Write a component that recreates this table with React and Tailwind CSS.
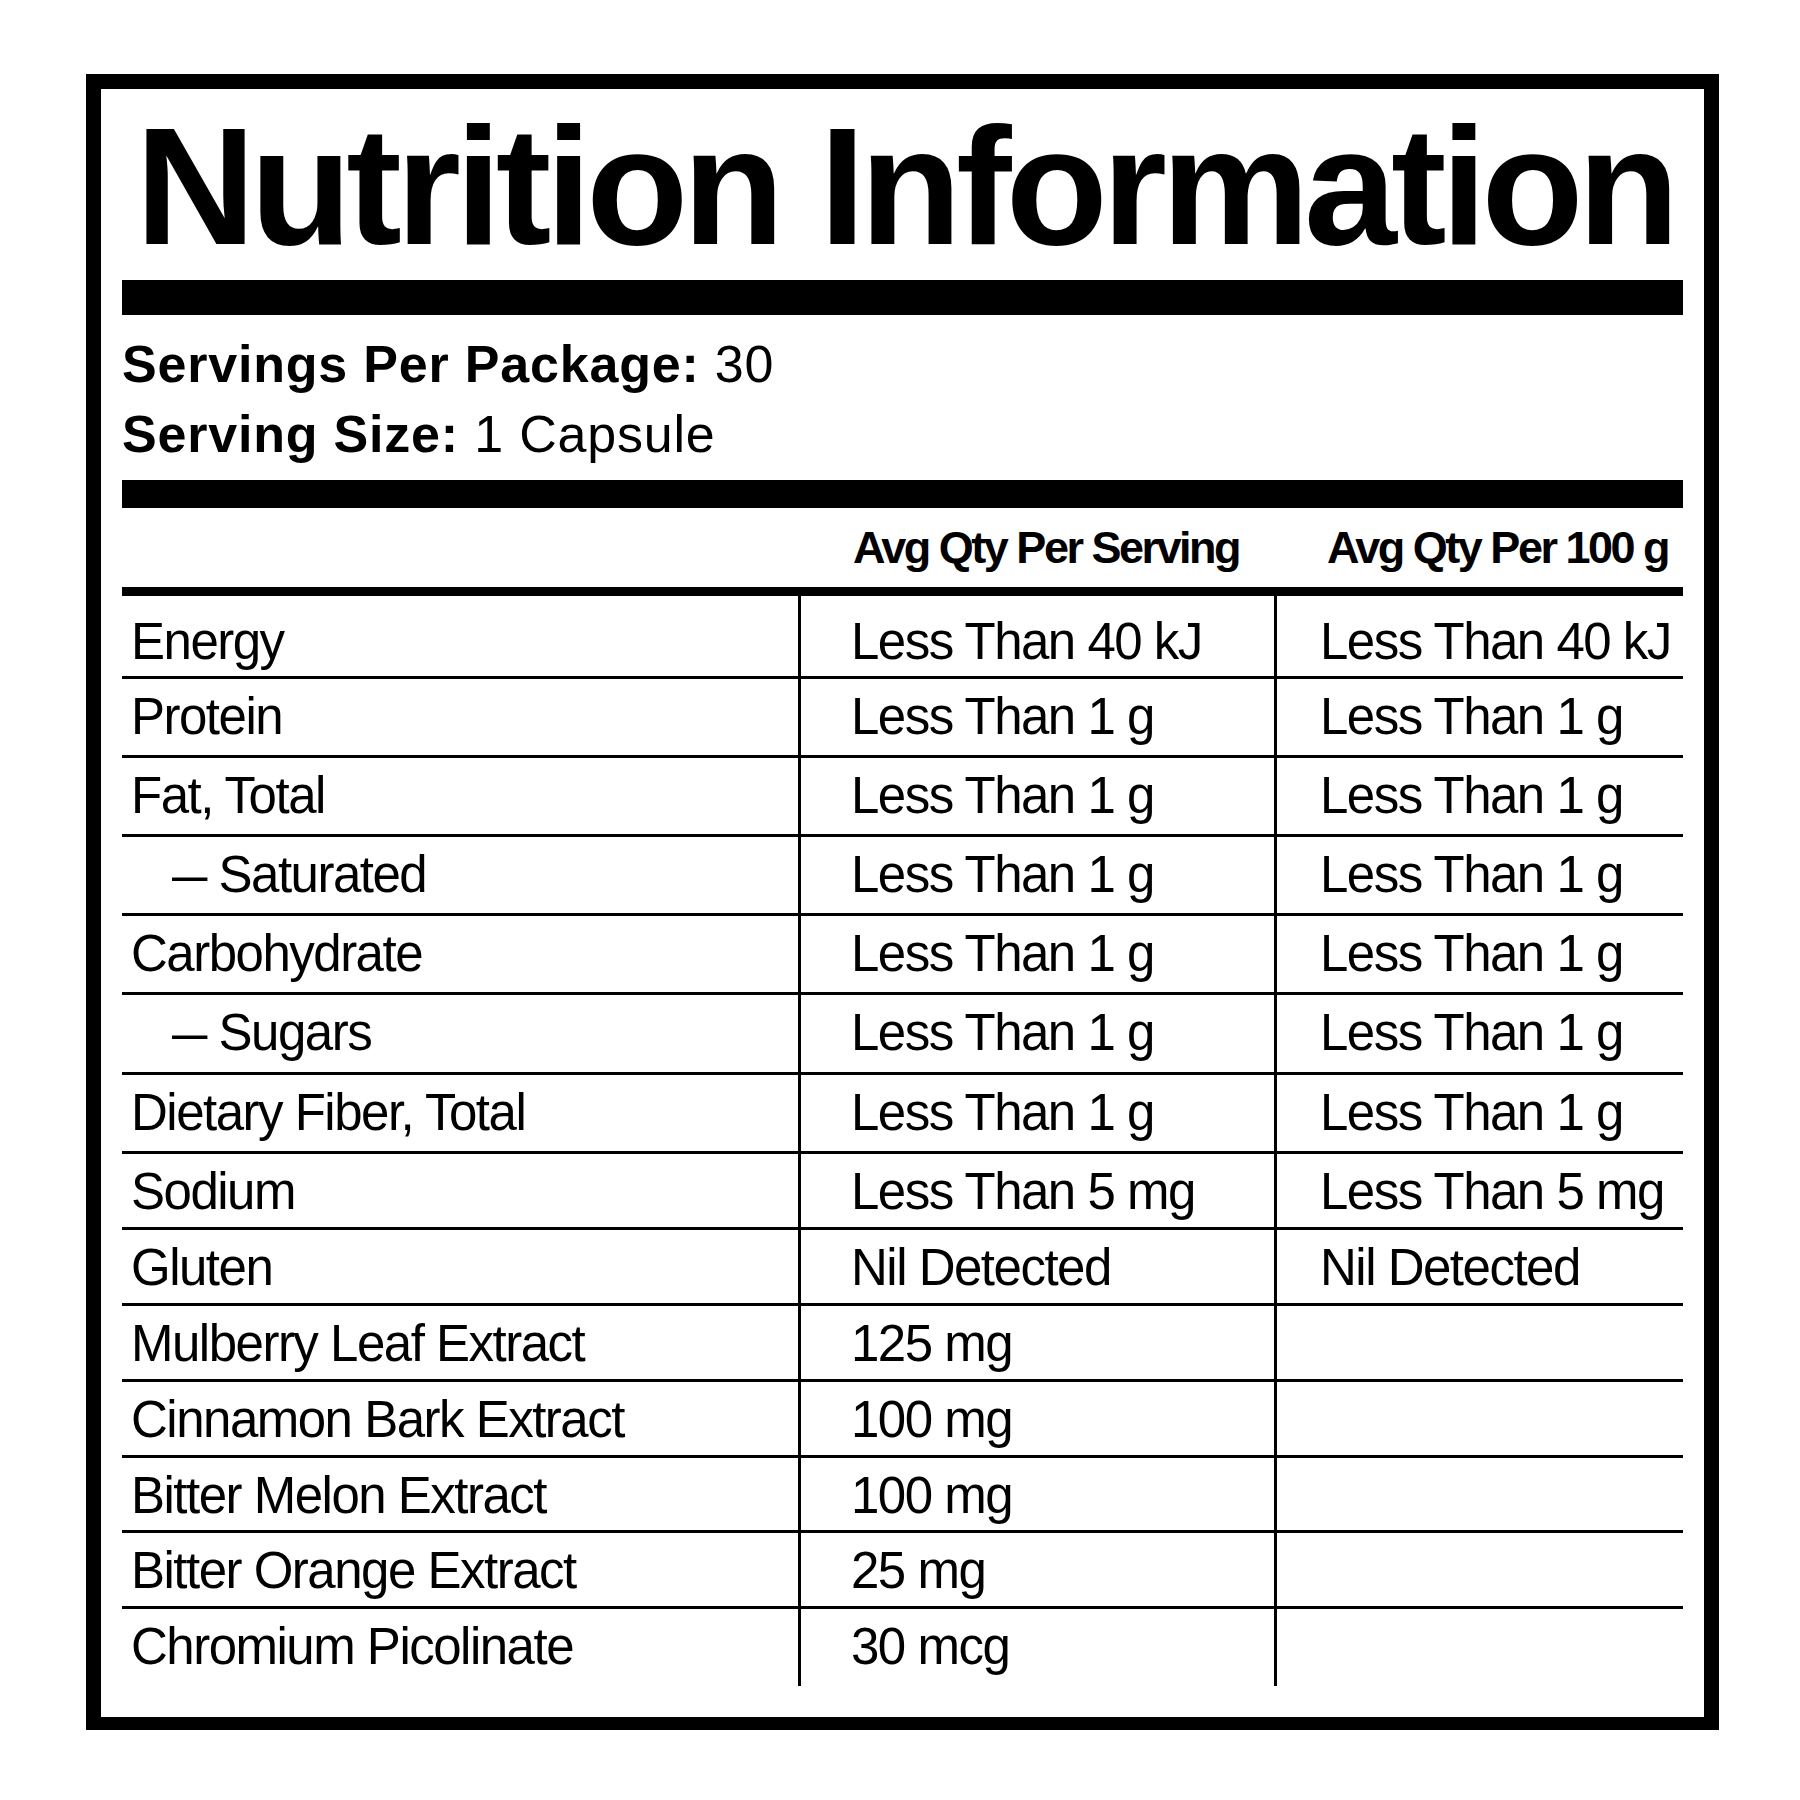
const rows = [
  { name: "Energy", serving: "Less Than 40 kJ", per100: "Less Than 40 kJ", h: "h-[83px]", pad: "pt-[8px]" },
  { name: "Protein", serving: "Less Than 1 g", per100: "Less Than 1 g", h: "h-[79px]" },
  { name: "Fat, Total", serving: "Less Than 1 g", per100: "Less Than 1 g", h: "h-[79px]" },
  { name: "Saturated", sub: true, serving: "Less Than 1 g", per100: "Less Than 1 g", h: "h-[79px]" },
  { name: "Carbohydrate", serving: "Less Than 1 g", per100: "Less Than 1 g", h: "h-[79px]" },
  { name: "Sugars", sub: true, serving: "Less Than 1 g", per100: "Less Than 1 g", h: "h-[80px]" },
  { name: "Dietary Fiber, Total", serving: "Less Than 1 g", per100: "Less Than 1 g", h: "h-[79px]" },
  { name: "Sodium", serving: "Less Than 5 mg", per100: "Less Than 5 mg", h: "h-[76px]" },
  { name: "Gluten", serving: "Nil Detected", per100: "Nil Detected", h: "h-[76px]" },
  { name: "Mulberry Leaf Extract", serving: "125 mg", per100: "", h: "h-[76px]" },
  { name: "Cinnamon Bark Extract", serving: "100 mg", per100: "", h: "h-[76px]" },
  { name: "Bitter Melon Extract", serving: "100 mg", per100: "", h: "h-[75px]" },
  { name: "Bitter Orange Extract", serving: "25 mg", per100: "", h: "h-[76px]" },
  { name: "Chromium Picolinate", serving: "30 mcg", per100: "", h: "h-[75px]", last: true },
];

function Row({ row }) {
  const pad = row.pad || "";
  return (
    <div
      className={`grid grid-cols-[676px_476px_409px] ${row.h} ${
        row.last ? "" : "border-b-[3px] border-black"
      }`}
    >
      <div className={`flex items-center pl-[9px] ${pad}`}>
        <span>
          {row.sub && (
            <span className="inline-block origin-left scale-x-125 ml-[41px] mr-[7px]">–</span>
          )}
          {row.sub && " "}
          {row.name}
        </span>
      </div>
      <div className={`flex items-center border-l-[3px] border-black pl-[50px] ${pad}`}>
        {row.serving}
      </div>
      <div className={`flex items-center border-l-[3px] border-black pl-[43px] ${pad}`}>
        {row.per100}
      </div>
    </div>
  );
}

export default function App() {
  return (
    <div
      className="min-h-[1800px] bg-white text-black pt-[74px] pl-[86px]"
      style={{ fontFamily: '"Liberation Sans", Arial, sans-serif' }}
    >
      <div className="w-[1633px] h-[1656px] border-[15px] border-b-[13px] border-black px-[21px] pt-[14px]">
        {/* Title */}
        <h1 className="text-center pl-[4px] text-[167px] leading-none font-bold tracking-[-5.8px] whitespace-nowrap">
          Nutrition Information
        </h1>

        <div className="mt-[10px] h-[35px] bg-black" />

        {/* Servings */}
        <div className="mt-[14px] text-[52px] leading-[70px] tracking-[0.8px]">
          <div>
            <span className="font-bold">Servings Per Package:</span> 30
          </div>
          <div>
            <span className="font-bold">Serving Size:</span> 1 Capsule
          </div>
        </div>

        <div className="mt-[11px] h-[28px] bg-black" />

        {/* Column headings */}
        <div className="grid grid-cols-[676px_476px_409px] h-[79px] text-[45px] font-bold tracking-[-2.5px]">
          <div />
          <div className="flex items-center pl-[55px]">Avg Qty Per Serving</div>
          <div className="flex items-center pl-[53px]">Avg Qty Per 100 g</div>
        </div>

        <div className="h-[9px] bg-black" />

        {/* Table body */}
        <div className="text-[51px] tracking-[-1.5px]">
          {rows.map((row) => (
            <Row key={row.name} row={row} />
          ))}
        </div>
      </div>
    </div>
  );
}
